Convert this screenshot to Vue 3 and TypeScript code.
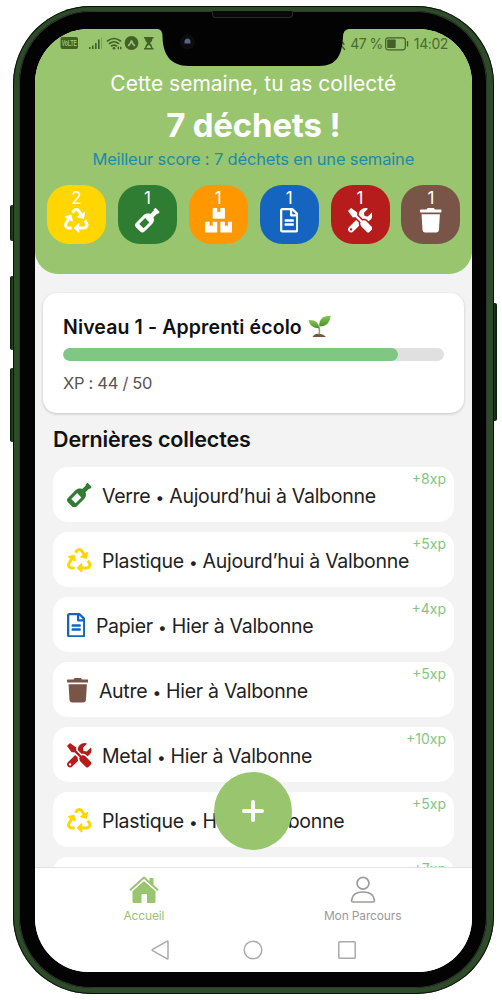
<script setup lang="ts">
type Kind = 'plastic' | 'glass' | 'cardboard' | 'paper' | 'metal' | 'other'

interface Icon { width: number; path: string }
interface Badge { kind: Kind; count: number }
interface Entry { kind?: Kind; label?: string; place?: string; xp: number }

const icons: Record<Kind, Icon> = {
  plastic: {
    width: 512,
    path: 'M184.561 261.903c3.232 13.997-12.123 24.635-24.068 17.168l-40.736-25.455-50.867 81.402C55.606 356.273 70.96 384 96.012 384H148c6.627 0 12 5.373 12 12v40c0 6.627-5.373 12-12 12H96.115c-75.334 0-121.302-83.048-81.408-146.88l50.822-81.388-40.725-25.448c-12.081-7.547-8.966-25.961 4.879-29.158l110.237-25.45c8.611-1.988 17.201 3.381 19.189 11.99l25.452 110.237zm98.561-182.915l41.289 66.076-40.74 25.457c-12.051 7.528-9 25.953 4.879 29.158l110.237 25.45c8.672 1.999 17.215-3.438 19.189-11.99l25.45-110.237c3.197-13.844-11.99-24.719-24.068-17.168l-40.687 25.424-41.263-66.082c-37.521-60.033-125.209-60.171-162.816 0l-17.963 28.766c-3.51 5.62-1.8 13.021 3.82 16.533l33.919 21.195c5.62 3.512 13.024 1.803 16.536-3.817l17.961-28.743c12.712-20.341 41.973-19.676 54.257-.022zM497.288 301.12l-27.515-44.065c-3.511-5.623-10.916-7.334-16.538-3.821l-33.861 21.159c-5.62 3.512-7.33 10.915-3.818 16.536l27.564 44.112c13.257 21.211-2.057 48.96-27.136 48.96H320V336.02c0-14.213-17.242-21.383-27.313-11.313l-80 79.981c-6.249 6.248-6.249 16.379 0 22.627l80 79.989C302.689 517.308 320 510.3 320 495.989V448h95.88c75.274 0 121.335-82.997 81.408-146.88z',
  },
  glass: {
    width: 512,
    path: 'M507.31 72.57L439.43 4.69c-6.25-6.25-16.38-6.25-22.63 0l-22.63 22.63c-6.25 6.25-6.25 16.38 0 22.63l-76.67 76.67c-46.58-19.7-102.4-10.73-140.37 27.23L18.75 312.23c-24.99 24.99-24.99 65.52 0 90.51l90.51 90.51c24.99 24.99 65.52 24.99 90.51 0l158.39-158.39c37.96-37.96 46.93-93.79 27.23-140.37l76.67-76.67c6.25 6.25 16.38 6.25 22.63 0l22.63-22.63c6.24-6.24 6.24-16.37-.01-22.62zM179.22 423.29l-90.51-90.51 122.04-122.04 90.51 90.51-122.04 122.04z',
  },
  cardboard: {
    width: 576,
    path: 'M560 288h-80v96l-32-21.3-32 21.3v-96h-80c-8.8 0-16 7.2-16 16v192c0 8.8 7.2 16 16 16h224c8.8 0 16-7.2 16-16V304c0-8.8-7.2-16-16-16zm-384-64h224c8.8 0 16-7.2 16-16V16c0-8.8-7.2-16-16-16h-80v96l-32-21.3L256 96V0h-80c-8.8 0-16 7.2-16 16v192c0 8.8 7.2 16 16 16zm64 64h-80v96l-32-21.3L96 384v-96H16c-8.8 0-16 7.2-16 16v192c0 8.8 7.2 16 16 16h224c8.8 0 16-7.2 16-16V304c0-8.8-7.2-16-16-16z',
  },
  paper: {
    width: 384,
    path: 'M288 248v28c0 6.6-5.4 12-12 12H108c-6.6 0-12-5.4-12-12v-28c0-6.6 5.4-12 12-12h168c6.6 0 12 5.4 12 12zm-12 72H108c-6.6 0-12 5.4-12 12v28c0 6.6 5.4 12 12 12h168c6.6 0 12-5.4 12-12v-28c0-6.6-5.4-12-12-12zm108-188.1V464c0 26.5-21.5 48-48 48H48c-26.5 0-48-21.5-48-48V48C0 21.5 21.5 0 48 0h204.1C264.8 0 277 5.1 286 14.1L369.9 98c9 8.9 14.1 21.2 14.1 33.9zm-128-80V128h76.1L256 51.9zM336 464V176H232c-13.3 0-24-10.7-24-24V48H48v416h288z',
  },
  metal: {
    width: 512,
    path: 'M501.1 395.7L384 278.6c-23.1-23.1-57.6-27.6-85.4-13.9L192 158.1V96L64 0 0 64l96 128h62.1l106.6 106.6c-13.6 27.8-9.2 62.3 13.9 85.4l117.1 117.1c14.6 14.6 38.2 14.6 52.7 0l52.7-52.7c14.5-14.6 14.5-38.2 0-52.7zM331.7 225c28.3 0 54.9 11 74.9 31l19.4 19.4c15.8-6.9 30.8-16.5 43.8-29.5 37.1-37.1 49.7-89.3 37.9-136.7-2.2-9-13.5-12.1-20.1-5.5l-74.4 74.4-67.9-11.3L334 98.9l74.4-74.4c6.6-6.6 3.4-17.9-5.7-20.2-47.4-11.7-99.6.9-136.6 37.9-28.5 28.5-41.9 66.1-41.2 103.6l82.1 82.1c8.1-1.9 16.5-2.9 24.7-2.9zm-103.9 82l-56.7-56.7L18.7 402.8c-25 25-25 65.5 0 90.5s65.5 25 90.5 0l123.6-123.6c-7.6-19.9-9.9-41.6-5-62.7zM64 472c-13.2 0-24-10.8-24-24 0-13.3 10.7-24 24-24s24 10.7 24 24c0 13.2-10.7 24-24 24z',
  },
  other: {
    width: 448,
    path: 'M432 32H312l-9.4-18.7A24 24 0 0 0 281.1 0H166.8a23.72 23.72 0 0 0-21.4 13.3L136 32H16A16 16 0 0 0 0 48v32a16 16 0 0 0 16 16h416a16 16 0 0 0 16-16V48a16 16 0 0 0-16-16zM53.2 467a48 48 0 0 0 47.9 45h245.8a48 48 0 0 0 47.9-45L416 128H32z',
  },
}

const badges: Badge[] = [
  { kind: 'plastic', count: 2 },
  { kind: 'glass', count: 1 },
  { kind: 'cardboard', count: 1 },
  { kind: 'paper', count: 1 },
  { kind: 'metal', count: 1 },
  { kind: 'other', count: 1 },
]

const entries: Entry[] = [
  { kind: 'glass', label: 'Verre', place: 'Aujourd’hui à Valbonne', xp: 8 },
  { kind: 'plastic', label: 'Plastique', place: 'Aujourd’hui à Valbonne', xp: 5 },
  { kind: 'paper', label: 'Papier', place: 'Hier à Valbonne', xp: 4 },
  { kind: 'other', label: 'Autre', place: 'Hier à Valbonne', xp: 5 },
  { kind: 'metal', label: 'Metal', place: 'Hier à Valbonne', xp: 10 },
  { kind: 'plastic', label: 'Plastique', place: 'Hier à Valbonne', xp: 5 },
  { xp: 7 },
]

const xp = 44
const xpGoal = 50
</script>

<template>
  <div class="stage">
    <i class="key key-mute"></i>
    <i class="key key-up"></i>
    <i class="key key-down"></i>
    <i class="key key-power"></i>

    <div class="phone">
      <div class="bezel">
        <main class="screen">
          <header class="hero">
            <div class="status">
              <svg width="96" height="16" viewBox="0 0 96 16">
                <rect x="0.5" y="1" width="17.5" height="12" rx="2" fill="#436127" />
                <text x="1.8" y="10.3" textLength="15" lengthAdjust="spacingAndGlyphs" class="volte">VoLTE</text>
                <g fill="#436127">
                  <rect x="29" y="11" width="1.6" height="2" />
                  <rect x="32" y="9.5" width="1.6" height="3.5" />
                  <rect x="35" y="7" width="1.6" height="6" />
                  <rect x="38" y="3.5" width="1.6" height="9.5" />
                  <rect x="41" y="1.5" width="1" height="11.5" opacity=".3" />
                </g>
                <path d="M47.5 5q6.500-5 13 0M49.5 7.500q4.500-3.400 9 0M51.500 10q2.500-1.800 5 0" fill="none" stroke="#436127" stroke-width="1.6" stroke-linecap="round" />
                <circle cx="54" cy="12.3" r="1.3" fill="#436127" />
                <path d="M57 12l2-1.700v3.400zM62 12l-2-1.700v3.400z" fill="#436127" />
                <circle cx="71.5" cy="7" r="6.9" fill="#436127" />
                <path d="M68.600 9.500q2-1.500 2.900-5q.9 3.500 2.900 5" fill="none" stroke="#98c56e" stroke-width="1.6" stroke-linecap="round" />
                <path d="M84 1h9.500v1.500h-1q0 3-2.400 4.800q2.400 1.700 2.400 4.700h1v1.500H84V12h1q0-3 2.400-4.700Q85 5.500 85 2.500h-1z" fill="#436127" />
                <path d="M86.500 12q.3-2.500 2.300-3q2 .5 2.200 3z" fill="#98c56e" />
              </svg>
              <div class="status-right">
                <svg width="5" height="14" viewBox="0 0 5 14"><path d="M0 8l4 5M0 5q2.500 0 3 3" fill="none" stroke="#436127" stroke-width="1.3" /></svg>
                <span class="charge">47 %</span>
                <svg width="24" height="14" viewBox="0 0 24 14">
                  <rect x=".7" y=".8" width="19.6" height="12" rx="2.5" fill="none" stroke="#436127" stroke-width="1.2" />
                  <rect x="2.2" y="2.5" width="8.5" height="8.6" rx=".8" fill="#436127" />
                  <rect x="21.8" y="4" width="1.4" height="5.5" rx=".5" fill="#436127" />
                </svg>
                <span class="clock">14:02</span>
              </div>
            </div>
            <p class="intro"><span>Cette semaine, tu as collecté</span></p>
            <h1><span>7 déchets !</span></h1>
            <p class="best"><span>Meilleur score : 7 déchets en une semaine</span></p>
            <div class="badges">
              <div v-for="b in badges" :key="b.kind" class="badge" :class="'bg-' + b.kind">
                <span>{{ b.count }}</span>
                <svg class="icon" height="24.5" :width="(icons[b.kind].width / 512) * 24.5" :viewBox="`0 0 ${icons[b.kind].width} 512`">
                  <path :d="icons[b.kind].path" />
                </svg>
              </div>
            </div>
          </header>

          <section class="level">
            <h2>
              <span>Niveau 1 - Apprenti écolo</span>
              <svg width="23" height="23" viewBox="0 0 23 23">
                <defs>
                  <linearGradient id="leaf" x1="0" y1="0" x2="0" y2="1">
                    <stop offset="0" stop-color="#8cc653" />
                    <stop offset="1" stop-color="#47902c" />
                  </linearGradient>
                </defs>
                <path d="M4.500 22q1.500-3 5-3.200q5-.3 8.500 3.200z" fill="#795046" />
                <path d="M11.200 19.500q.6-4-.2-7.500" fill="none" stroke="#75b543" stroke-width="1.5" />
                <path d="M.5 5.200q10-1 10.700 8.100Q2.500 13.500.5 5.200z" fill="url(#leaf)" />
                <path d="M22.700.7q-12-.3-11.500 10.700Q22 11.500 22.700.7z" fill="url(#leaf)" />
              </svg>
            </h2>
            <div class="bar"><div class="bar-fill" :style="{ width: (xp / xpGoal) * 100 + '%' }"></div></div>
            <p class="xp">XP : {{ xp }} / {{ xpGoal }}</p>
          </section>

          <section class="history">
            <h3>Dernières collectes</h3>
            <ul>
              <li v-for="(e, i) in entries" :key="i">
                <svg v-if="e.kind" class="icon" :class="'fg-' + e.kind" height="24.5" :width="(icons[e.kind].width / 512) * 24.5" :viewBox="`0 0 ${icons[e.kind].width} 512`">
                  <path :d="icons[e.kind].path" />
                </svg>
                <span v-if="e.label" class="entry">{{ e.label }} <span class="dot">•</span> {{ e.place }}</span>
                <span class="gain">+{{ e.xp }}xp</span>
              </li>
            </ul>
            <button class="add" aria-label="Ajouter">
              <svg width="22" height="22" viewBox="0 0 22 22"><path d="M11 2v18M2 11h18" stroke="#fff" stroke-width="4" stroke-linecap="round" /></svg>
            </button>
          </section>

          <footer>
            <nav class="tabs">
              <a class="tab active">
                <svg width="30" height="28" viewBox="0 0 30 28">
                  <path d="M3.500 15L15 5l11.500 10v10.500q0 1.500-1.500 1.500h-7v-8q0-1-1-1h-3.500q-1 0-1 1v8H5q-1.500 0-1.500-1.500z" fill="#98c56e" />
                  <path d="M1.500 14.500L15 2.300l13.500 12.200" fill="none" stroke="#fff" stroke-width="3.6" />
                  <path d="M20.500 2h4v8l-4-3.600z" fill="#98c56e" />
                  <path d="M1.500 13.800L15 1.600l13.500 12.200" fill="none" stroke="#98c56e" stroke-width="2" stroke-linecap="round" stroke-linejoin="round" />
                </svg>
                <span>Accueil</span>
              </a>
              <a class="tab">
                <svg width="28" height="28" viewBox="0 0 28 28" fill="none" stroke="#9c9c9c" stroke-width="1.7">
                  <circle cx="14" cy="7.2" r="5.9" />
                  <path d="M2.500 24.500q.7-8.500 11.500-8.500t11.500 8.500q0 1.500-1.500 1.500h-20q-1.500 0-1.500-1.500z" />
                </svg>
                <span>Mon Parcours</span>
              </a>
            </nav>
            <div class="system">
              <svg width="22" height="22" viewBox="0 0 22 22"><path d="M19 2.600v16.800q0 .8-.8.4L3.600 11.600q-.8-.6 0-1.200L18.200 2.200q.8-.4.8.4z" /></svg>
              <svg width="22" height="22" viewBox="0 0 22 22"><circle cx="11" cy="11" r="8.8" /></svg>
              <svg width="22" height="22" viewBox="0 0 22 22"><rect x="2.8" y="2.8" width="16.4" height="16.4" rx=".8" /></svg>
            </div>
          </footer>
        </main>
        <svg class="notch" width="200" height="42" viewBox="0 0 200 42">
          <path d="M5 0V4H9Q13.500 4.500 13.500 12C14 29 21 41 40 41H170C188 41 193 30 194 12Q194 4.500 200 4V0z" fill="#030303" />
          <circle cx="38.5" cy="17" r="7.5" fill="#0c0c0e" />
          <path d="M35.500 17q0-3.500 3-3.500t3 3.500v1.500h-6z" fill="#526783" />
        </svg>
        <i class="speaker"></i>
      </div>
    </div>
  </div>
</template>

<style>
body {
  background: #fff;
}
</style>

<style scoped>
.stage {
  position: relative;
  box-sizing: border-box;
  width: 502px;
  height: 1000px;
  padding: 6px 8.5px 6.5px 12.5px;
  overflow: hidden;
  font-family: Inter, "Open Sans", sans-serif;
}
p, h1, h2, h3, ul { margin: 0; padding: 0; }
span { white-space: nowrap; }

.key {
  position: absolute;
  width: 6px;
  border-radius: 2px;
  background: linear-gradient(90deg, #0a100a, #24421f 40%, #0e190d);
}
.key-mute { left: 9.5px; top: 205px; height: 36px; }
.key-up { left: 9.5px; top: 276px; height: 74px; }
.key-down { left: 9.5px; top: 368px; height: 74px; }
.key-power { left: 491px; top: 303px; height: 118px; }

.phone {
  position: relative;
  box-sizing: border-box;
  height: 100%;
  padding: 5px 7px 5.5px 6.5px;
  border-radius: 78px;
  background: #2d4a29;
  box-shadow: inset 0 0 0 1px #0b120a;
}
.bezel {
  position: relative;
  box-sizing: border-box;
  height: 100%;
  padding: 18px 14.5px 16.5px 15.5px;
  border-radius: 72px;
  background: #030303;
  box-shadow: inset 0 0 0 1px #303432;
}
.screen {
  display: flex;
  flex-direction: column;
  height: 100%;
  overflow: hidden;
  border-radius: 54px;
  background: #f3f3f3;
}
.notch {
  position: absolute;
  left: 130px;
  top: 14px;
}
.speaker {
  position: absolute;
  left: 193px;
  top: 0;
  width: 81px;
  height: 7px;
  box-sizing: border-box;
  border: 1px solid #292929;
  border-top: 0;
  border-radius: 0 0 4px 4px;
  background: #090909;
}

.hero {
  flex: none;
  box-sizing: border-box;
  height: 244.5px;
  border-radius: 0 0 23px 23px;
  background: #98c56e;
  color: #fff;
  text-align: center;
}
.status {
  display: flex;
  justify-content: space-between;
  height: 39.5px;
  box-sizing: border-box;
  padding: 7px 24px 0 25.5px;
  color: #4c6b30;
}
.status-right {
  display: flex;
  align-items: center;
  height: 15px;
  font-size: 14px;
}
.volte { font: 700 8.5px "Liberation Sans", sans-serif; fill: #98c56e; }
.charge { margin: 0 2px 0 4px; letter-spacing: -0.5px; }
.clock { margin-left: 5px; letter-spacing: -0.4px; }
.intro { font-size: 21px; line-height: 30px; }
h1 { margin-top: 6.5px; font-size: 33px; font-weight: 700; line-height: 40px; letter-spacing: -0.2px; }
.best { margin-top: 2px; font-size: 16.5px; line-height: 24px; letter-spacing: -0.17px; color: #1e8ba8; }
.badges {
  display: flex;
  justify-content: space-between;
  margin: 13.5px 11.5px 0 12.5px;
}
.badge {
  display: flex;
  flex-direction: column;
  align-items: center;
  box-sizing: border-box;
  width: 59px;
  height: 59px;
  padding-top: 3.5px;
  border-radius: 22px;
  font-size: 17px;
  line-height: 20px;
}
.icon { display: block; flex: none; fill: currentColor; }
.bg-plastic { background: #ffd600; }
.bg-glass { background: #2e7d32; }
.bg-cardboard { background: #ff9800; }
.bg-paper { background: #1565c0; }
.bg-metal { background: #b71c1c; }
.bg-other { background: #795548; }
.fg-plastic { color: #ffd600; }
.fg-glass { color: #2e7d32; }
.fg-paper { color: #1565c0; }
.fg-metal { color: #b71c1c; }
.fg-other { color: #795548; }

.level {
  flex: none;
  box-sizing: border-box;
  height: 119.5px;
  margin: 19.5px 8.5px 0;
  padding: 20px 19.5px 0 20px;
  border-radius: 14px;
  background: #fff;
  box-shadow: 0 1px 3px rgba(0, 0, 0, .2);
}
h2 {
  display: flex;
  align-items: center;
  gap: 6px;
  height: 27px;
  font-size: 19.5px;
  font-weight: 600;
  letter-spacing: 0.12px;
  color: #111;
}
.bar {
  height: 12.5px;
  margin-top: 8px;
  overflow: hidden;
  border-radius: 7px;
  background: #e0e0e0;
}
.bar-fill { height: 100%; border-radius: 7px; background: #81c784; }
.xp { margin-top: 10.5px; font-size: 16.5px; line-height: 24px; letter-spacing: -0.3px; color: #555; }

.history {
  position: relative;
  flex: 1;
  min-height: 0;
  overflow: hidden;
  padding: 11.5px 18px 0 18.5px;
}
h3 { font-size: 21.5px; font-weight: 600; line-height: 30px; letter-spacing: -0.15px; color: #111; }
ul { display: flex; flex-direction: column; gap: 10.1px; margin-top: 12.5px; list-style: none; }
li {
  position: relative;
  display: flex;
  align-items: center;
  gap: 10.5px;
  box-sizing: border-box;
  height: 55px;
  padding: 2px 14px 0;
  border-radius: 15px;
  background: #fff;
}
.entry { padding-top: 1px; font-size: 19.5px; letter-spacing: -0.29px; color: #222; }
.dot { font-size: 15.5px; }
.gain { position: absolute; right: 8px; top: 3px; font-size: 14px; line-height: 18px; color: #81c784; }
.add {
  position: absolute;
  left: 179.5px;
  top: 359px;
  display: flex;
  align-items: center;
  justify-content: center;
  width: 78px;
  height: 78px;
  padding: 0;
  border: 0;
  border-radius: 50%;
  background: #98c56e;
}

footer {
  flex: none;
  height: 104.5px;
  box-sizing: border-box;
  border-top: 1px solid #e2e2e2;
  background: #fff;
}
.tabs { display: flex; height: 71px; }
.tab {
  flex: 1;
  display: flex;
  flex-direction: column;
  align-items: center;
  padding-top: 8px;
  font-size: 12px;
  line-height: 16px;
  letter-spacing: -0.15px;
  color: #999;
}
.tab svg { margin-bottom: 4px; }
.active { color: #98c56e; }
.system { display: flex; justify-content: center; gap: 71.5px; }
.system svg { fill: none; stroke: #aaa; stroke-width: 1.5; }
</style>
